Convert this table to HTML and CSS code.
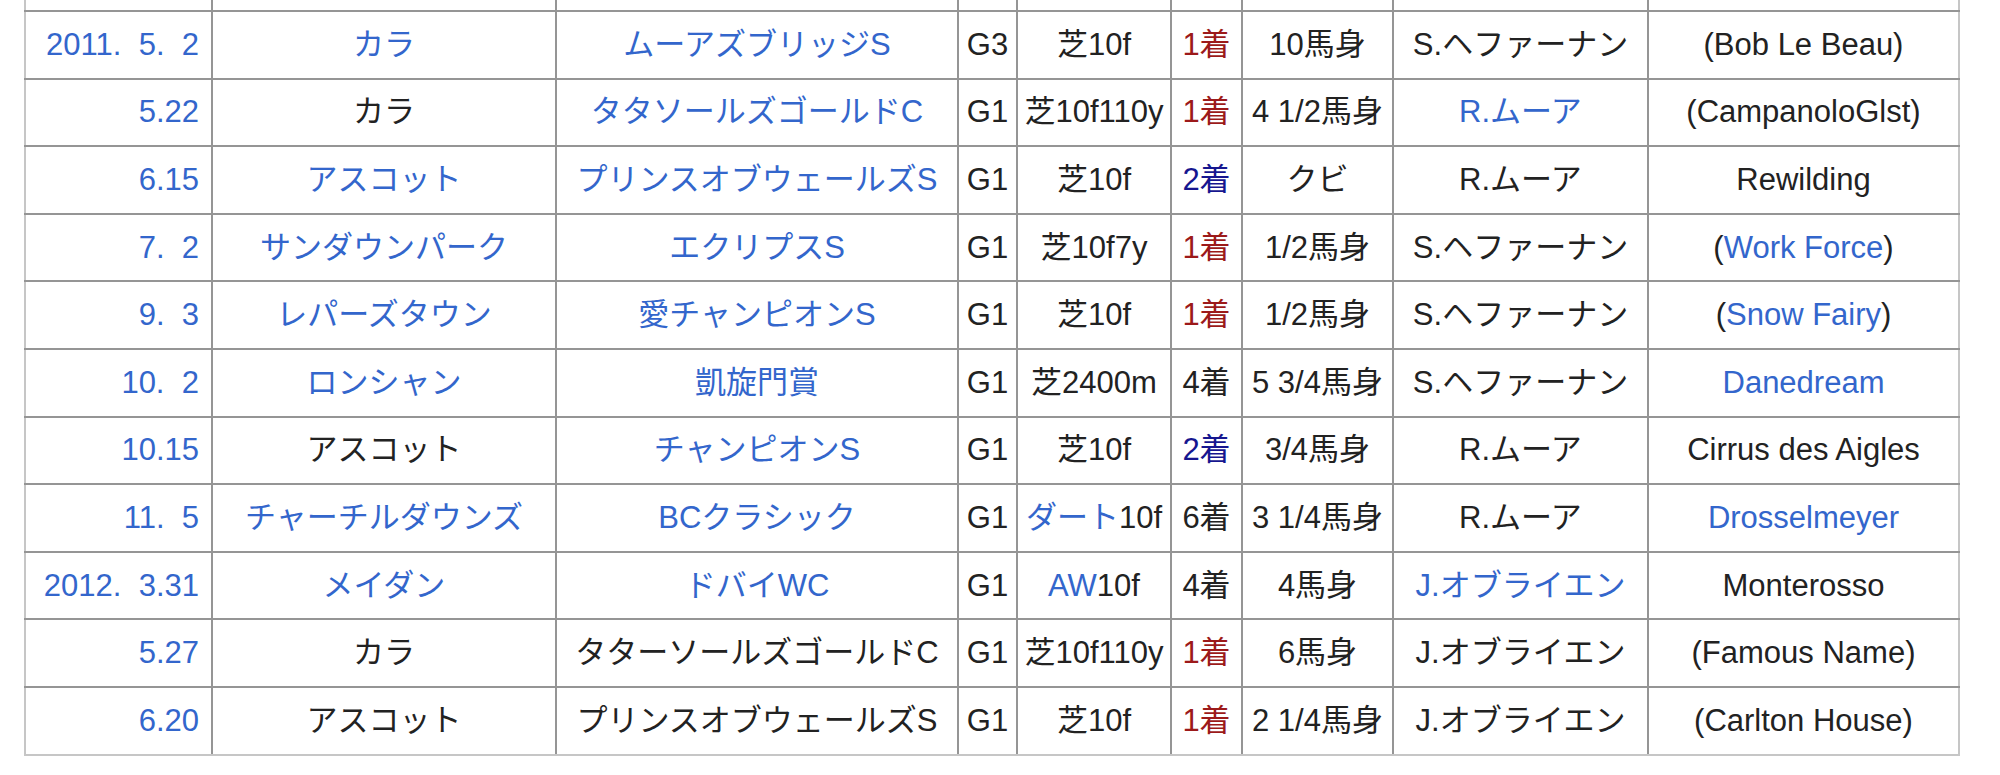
FILE: index.html
```html
<!DOCTYPE html>
<html lang="ja">
<head>
<meta charset="utf-8">
<title>競走成績</title>
<link rel="stylesheet" href="styles.css">
</head>
<body>
<table class="results">
  <colgroup>
    <col class="c-date"><col class="c-course"><col class="c-race"><col class="c-grade"><col class="c-dist"><col class="c-place"><col class="c-margin"><col class="c-jockey"><col class="c-winner">
  </colgroup>
  <tbody>
    <tr class="stub"><td></td><td></td><td></td><td></td><td></td><td></td><td></td><td></td><td></td></tr>
    <tr>
      <td class="date"><a>2011.<span class="z">0</span>5.<span class="z">0</span>2</a></td>
      <td><a>カラ</a></td>
      <td><a>ムーアズブリッジS</a></td>
      <td>G3</td>
      <td>芝10f</td>
      <td><span class="win">1着</span></td>
      <td>10馬身</td>
      <td>S.ヘファーナン</td>
      <td>(Bob Le Beau)</td>
    </tr>
    <tr>
      <td class="date"><a>5.22</a></td>
      <td>カラ</td>
      <td><a>タタソールズゴールドC</a></td>
      <td>G1</td>
      <td>芝10f110y</td>
      <td><span class="win">1着</span></td>
      <td>4 1/2馬身</td>
      <td><a>R.ムーア</a></td>
      <td>(CampanoloGlst)</td>
    </tr>
    <tr>
      <td class="date"><a>6.15</a></td>
      <td><a>アスコット</a></td>
      <td><a>プリンスオブウェールズS</a></td>
      <td>G1</td>
      <td>芝10f</td>
      <td><span class="second">2着</span></td>
      <td>クビ</td>
      <td>R.ムーア</td>
      <td>Rewilding</td>
    </tr>
    <tr>
      <td class="date"><a>7.<span class="z">0</span>2</a></td>
      <td><a>サンダウンパーク</a></td>
      <td><a>エクリプスS</a></td>
      <td>G1</td>
      <td>芝10f7y</td>
      <td><span class="win">1着</span></td>
      <td>1/2馬身</td>
      <td>S.ヘファーナン</td>
      <td>(<a>Work Force</a>)</td>
    </tr>
    <tr>
      <td class="date"><a>9.<span class="z">0</span>3</a></td>
      <td><a>レパーズタウン</a></td>
      <td><a>愛チャンピオンS</a></td>
      <td>G1</td>
      <td>芝10f</td>
      <td><span class="win">1着</span></td>
      <td>1/2馬身</td>
      <td>S.ヘファーナン</td>
      <td>(<a>Snow Fairy</a>)</td>
    </tr>
    <tr>
      <td class="date"><a>10.<span class="z">0</span>2</a></td>
      <td><a>ロンシャン</a></td>
      <td><a>凱旋門賞</a></td>
      <td>G1</td>
      <td>芝2400m</td>
      <td>4着</td>
      <td>5 3/4馬身</td>
      <td>S.ヘファーナン</td>
      <td><a>Danedream</a></td>
    </tr>
    <tr>
      <td class="date"><a>10.15</a></td>
      <td>アスコット</td>
      <td><a>チャンピオンS</a></td>
      <td>G1</td>
      <td>芝10f</td>
      <td><span class="second">2着</span></td>
      <td>3/4馬身</td>
      <td>R.ムーア</td>
      <td>Cirrus des Aigles</td>
    </tr>
    <tr>
      <td class="date"><a>11.<span class="z">0</span>5</a></td>
      <td><a>チャーチルダウンズ</a></td>
      <td><a>BCクラシック</a></td>
      <td>G1</td>
      <td><a>ダート</a>10f</td>
      <td>6着</td>
      <td>3 1/4馬身</td>
      <td>R.ムーア</td>
      <td><a>Drosselmeyer</a></td>
    </tr>
    <tr>
      <td class="date"><a>2012.<span class="z">0</span>3.31</a></td>
      <td><a>メイダン</a></td>
      <td><a>ドバイWC</a></td>
      <td>G1</td>
      <td><a>AW</a>10f</td>
      <td>4着</td>
      <td>4馬身</td>
      <td><a>J.オブライエン</a></td>
      <td>Monterosso</td>
    </tr>
    <tr>
      <td class="date"><a>5.27</a></td>
      <td>カラ</td>
      <td>タターソールズゴールドC</td>
      <td>G1</td>
      <td>芝10f110y</td>
      <td><span class="win">1着</span></td>
      <td>6馬身</td>
      <td>J.オブライエン</td>
      <td>(Famous Name)</td>
    </tr>
    <tr class="last">
      <td class="date"><a>6.20</a></td>
      <td>アスコット</td>
      <td>プリンスオブウェールズS</td>
      <td>G1</td>
      <td>芝10f</td>
      <td><span class="win">1着</span></td>
      <td>2 1/4馬身</td>
      <td>J.オブライエン</td>
      <td>(Carlton House)</td>
    </tr>
  </tbody>
</table>
</body>
</html>
```
FILE: styles.css
```css
html, body {
  margin: 0;
  padding: 0;
  background: #ffffff;
}

body {
  font-family: "Liberation Sans", "Noto Sans CJK JP", sans-serif;
  font-size: 31px;
  color: #222222;
}

.results {
  border-collapse: collapse;
  table-layout: fixed;
  width: 1936px;
  margin-left: 24px;
}

.c-date { width: 187px; }
.c-course { width: 344px; }
.c-race { width: 402px; }
.c-grade { width: 59px; }
.c-dist { width: 154px; }
.c-place { width: 71px; }
.c-margin { width: 151px; }
.c-jockey { width: 255px; }
.c-winner { width: 311px; }

.results td {
  border: 2px solid #959595;
  height: 65.6px;
  padding: 0 4px;
  text-align: center;
  vertical-align: middle;
  white-space: nowrap;
  line-height: 36px;
}

.results tr.stub td {
  height: 10px;
  border-top: 0;
}

.results td:first-child {
  border-left-color: #c6c6c6;
}

.results td:last-child {
  border-right-color: #c6c6c6;
}

.results tr.last td {
  border-bottom-color: #c6c6c6;
}

.results td.date {
  text-align: right;
  padding-right: 12px;
}

.results a {
  color: #3366cc;
  text-decoration: none;
}

.z {
  visibility: hidden;
}

.win {
  color: #9c1a1a;
}

.second {
  color: #16168f;
}
```
